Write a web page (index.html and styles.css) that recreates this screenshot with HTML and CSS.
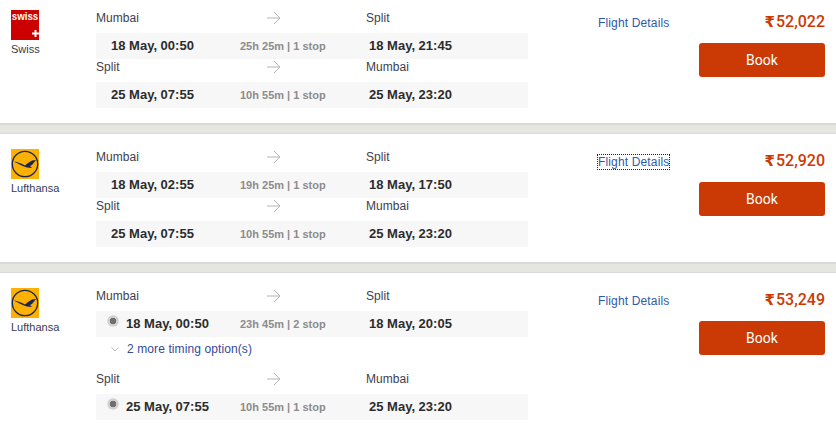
FILE: index.html
```html
<!DOCTYPE html>
<html lang="en">
<head>
<meta charset="utf-8">
<title>Flights</title>
<link rel="stylesheet" href="styles.css">
</head>
<body>
<svg class="defs" width="0" height="0">
  <defs>
    <symbol id="arrow" viewBox="0 0 14 14"><path d="M0 7H13M7 1l6 6-6 6" fill="none" stroke="#b4b4b4" stroke-width="1"/></symbol>
    <symbol id="crane" viewBox="0 0 28 30">
      <rect width="28" height="30" fill="#fdb100"/>
      <circle cx="14" cy="15" r="12.700" fill="none" stroke="#1c2450" stroke-width="1.300"/>
      <path d="M2.500 12.500C7 13 10 14.500 14 16.500L17 14 21 11.500 25 11 23 13.500 21 16 19 17 21 19 16 18.500C11 17 7 14.500 2.500 12.500Z" fill="#1c2450"/>
    </symbol>
  </defs>
</svg>

<section class="card card-first">
  <div class="airline">
    <svg class="logo" viewBox="0 0 28 30">
      <rect width="28" height="30" fill="#cc0000"/>
      <text class="swiss-word" x="14" y="10" text-anchor="middle" textLength="26.500" lengthAdjust="spacingAndGlyphs">swiss</text>
      <path d="M21 23.500h7M24.500 20v7" stroke="#fff" stroke-width="2"/>
    </svg>
    <span class="airline-name">Swiss</span>
  </div>
  <div class="legs">
    <div class="leg">
      <div class="route"><span>Mumbai</span><svg class="arrow"><use href="#arrow"/></svg><span>Split</span></div>
      <div class="times"><b class="dep">18 May, 00:50</b><span class="dur">25h 25m | 1 stop</span><b class="arr">18 May, 21:45</b></div>
    </div>
    <div class="leg">
      <div class="route"><span>Split</span><svg class="arrow"><use href="#arrow"/></svg><span>Mumbai</span></div>
      <div class="times"><b class="dep">25 May, 07:55</b><span class="dur">10h 55m | 1 stop</span><b class="arr">25 May, 23:20</b></div>
    </div>
  </div>
  <a class="details" href="#">Flight Details</a>
  <div class="buy">
    <div class="price"><span class="rupee">₹</span>52,022</div>
    <button class="book">Book</button>
  </div>
</section>

<div class="sep"></div>

<section class="card">
  <div class="airline">
    <svg class="logo"><use href="#crane"/></svg>
    <span class="airline-name">Lufthansa</span>
  </div>
  <div class="legs">
    <div class="leg">
      <div class="route"><span>Mumbai</span><svg class="arrow"><use href="#arrow"/></svg><span>Split</span></div>
      <div class="times"><b class="dep">18 May, 02:55</b><span class="dur">19h 25m | 1 stop</span><b class="arr">18 May, 17:50</b></div>
    </div>
    <div class="leg">
      <div class="route"><span>Split</span><svg class="arrow"><use href="#arrow"/></svg><span>Mumbai</span></div>
      <div class="times"><b class="dep">25 May, 07:55</b><span class="dur">10h 55m | 1 stop</span><b class="arr">25 May, 23:20</b></div>
    </div>
  </div>
  <a class="details focused" href="#">Flight Details</a>
  <div class="buy">
    <div class="price"><span class="rupee">₹</span>52,920</div>
    <button class="book">Book</button>
  </div>
</section>

<div class="sep"></div>

<section class="card">
  <div class="airline">
    <svg class="logo"><use href="#crane"/></svg>
    <span class="airline-name">Lufthansa</span>
  </div>
  <div class="legs">
    <div class="leg">
      <div class="route"><span>Mumbai</span><svg class="arrow"><use href="#arrow"/></svg><span>Split</span></div>
      <div class="times radio-row"><i class="radio"></i><b class="dep">18 May, 00:50</b><span class="dur">23h 45m | 2 stop</span><b class="arr">18 May, 20:05</b></div>
      <div class="more"><svg class="chev" viewBox="0 0 8 5"><path d="M.5.5L4 4 7.500.5" fill="none" stroke="#bbb"/></svg><span>2 more timing option(s)</span></div>
    </div>
    <div class="leg">
      <div class="route"><span>Split</span><svg class="arrow"><use href="#arrow"/></svg><span>Mumbai</span></div>
      <div class="times radio-row"><i class="radio"></i><b class="dep">25 May, 07:55</b><span class="dur">10h 55m | 1 stop</span><b class="arr">25 May, 23:20</b></div>
    </div>
  </div>
  <a class="details" href="#">Flight Details</a>
  <div class="buy">
    <div class="price"><span class="rupee">₹</span>53,249</div>
    <button class="book">Book</button>
  </div>
</section>
</body>
</html>
```

FILE: styles.css
```css
* { box-sizing: border-box; }
html, body { margin: 0; padding: 0; }
body {
  width: 836px;
  height: 434px;
  overflow: hidden;
  background: #fff;
  font-family: "Liberation Sans", Arial, sans-serif;
  font-size: 12px;
  color: #3a3a4a;
}
.defs { display: block; height: 0; }

.card {
  display: grid;
  grid-template-columns: 85px 432px 171px 126px;
  padding: 15px 11px 15px 11px;
  background: #fff;
}
.card-first { padding-top: 10px; }

.sep {
  height: 11px;
  background: #e6e6e1;
  border-top: 2px solid #d9d9d9;
  border-bottom: 1px solid #d9d9d9;
}

.airline { display: flex; flex-direction: column; align-items: flex-start; }
.logo { width: 28px; height: 30px; display: block; }
.airline-name { margin-top: 2px; font-size: 11px; line-height: 14px; color: #3a3a50; }
.swiss-word { font: bold 10.500px "Liberation Sans", sans-serif; fill: #fff; }

.legs { display: flex; flex-direction: column; }
.leg { display: flex; flex-direction: column; }

.route {
  display: grid;
  grid-template-columns: 171px 99px 1fr;
  height: 23px;
  padding-top: 1px;
  align-items: start;
  font-size: 12px;
  line-height: 14px;
  letter-spacing: .05px;
  color: #3e3e4e;
}
.arrow { width: 14px; height: 14px; display: block; }

.times {
  display: grid;
  grid-template-columns: 129px 129px 1fr;
  height: 26px;
  align-items: center;
  padding-left: 15px;
  background: #f7f7f7;
  position: relative;
}
.dep, .arr { font-weight: bold; font-size: 13px; color: #2c2c2c; margin-bottom: 2px; }
.dur { font-weight: bold; font-size: 11px; color: #8c8c8c; }

.radio-row { padding-left: 30px; grid-template-columns: 114px 129px 1fr; }
.radio {
  position: absolute;
  left: 11px;
  top: 4px;
  width: 12px;
  height: 12px;
  border-radius: 50%;
  background: radial-gradient(circle, #6e6e6e 0, #6e6e6e 3px, #d4d4d4 3.600px, #cfcfcf 5px, #e6e6e6 6px);
}

.more {
  display: flex;
  align-items: center;
  height: 24px;
  padding-left: 15px;
  margin-bottom: 10px;
  color: #34499b;
  font-size: 12px;
  letter-spacing: .1px;
}
.chev { width: 8px; height: 5px; margin-right: 8px; }

.details {
  align-self: start;
  justify-self: start;
  margin-top: 6px;
  margin-left: 70px;
  font-size: 12px;
  line-height: 14px;
  letter-spacing: .15px;
  color: #2c5aa8;
  text-decoration: none;
}
.details.focused { outline: 1px dotted #222; }

.buy { display: flex; flex-direction: column; align-items: flex-end; }
.price {
  margin-top: 3px;
  font-family: Roboto, "Liberation Sans", sans-serif;
  font-weight: 500;
  font-size: 16px;
  line-height: 18px;
  color: #cb3a04;
}
.rupee { font-family: "DejaVu Sans", sans-serif; font-size: 15px; font-weight: 700; margin-right: 1px; }
.book {
  display: block;
  width: 126px;
  height: 34px;
  margin-top: 12px;
  border: 0;
  border-radius: 3px;
  background: #cb3a04;
  color: #fff;
  font-family: Roboto, "Liberation Sans", sans-serif;
  font-size: 14px;
  padding: 0;
}
```
